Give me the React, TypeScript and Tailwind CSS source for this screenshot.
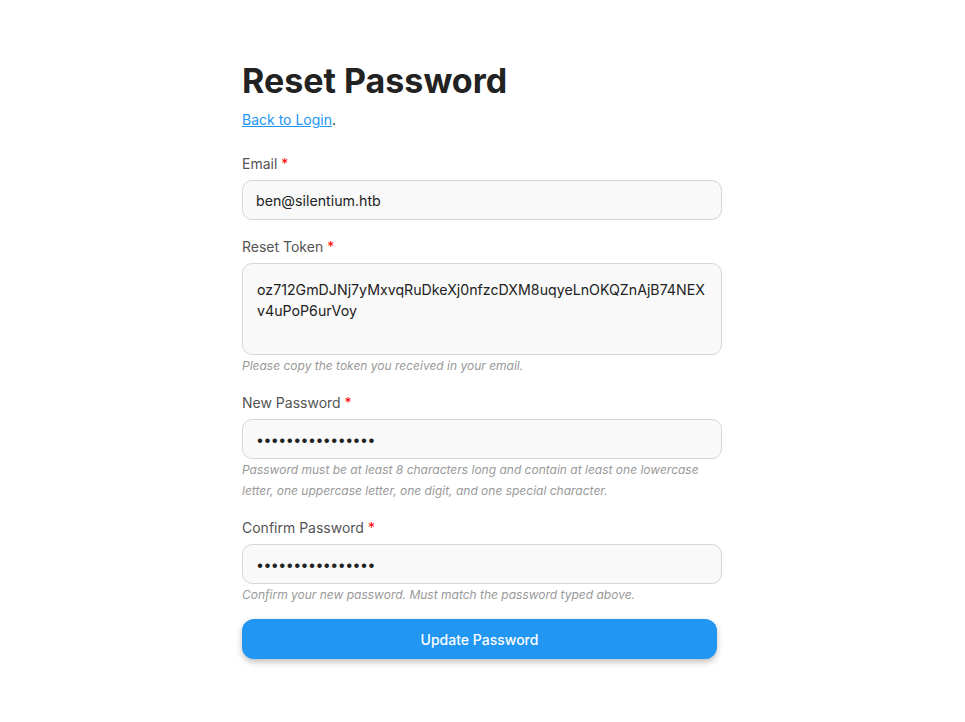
import { ReactNode } from "react";

const token = "oz712GmDJNj7yMxvqRuDkeXj0nfzcDXM8uqyeLnOKQZnAjB74NEXv4uPoP6urVoy";

function Field({ label, children, help }: { label: string; children: ReactNode; help?: string }) {
  return (
    <div className="mb-[15px]">
      <label className="mb-1 block text-[14px] leading-6 text-[#555]">
        {label} <span className="text-[#f00]">*</span>
      </label>
      {children}
      {help && <p className="text-[12px] italic leading-[21px] text-[#999]">{help}</p>}
    </div>
  );
}

const inputCls =
  "block h-10 w-full rounded-[10px] border border-[#d6d6d6] bg-[#f9f9f9] px-[13px] text-[14.2px] text-[#222] outline-none";

export default function App() {
  return (
    <div className="min-h-screen bg-white pr-px font-['Inter','Noto_Sans',sans-serif] text-[#222]">
      <div className="mx-auto w-[480px] pt-[60px]">
        <h1 className="text-[34px] font-bold leading-[41px] text-[#222]">Reset Password</h1>
        <p className="mt-[9px] text-[14px] leading-5">
          <a href="#" className="text-[#2196f3] underline">
            Back to Login
          </a>
          .
        </p>

        <form className="mt-[22px]" onSubmit={(e) => e.preventDefault()}>
          <Field label="Email">
            <input className={inputCls} type="email" defaultValue="ben@silentium.htb" />
          </Field>

          <Field label="Reset Token" help="Please copy the token you received in your email.">
            <textarea
              className="block h-[92px] w-full resize-none rounded-[10px] border border-[#d6d6d6] bg-[#f9f9f9] px-[14px] pt-[15px] text-[14.2px] leading-[21px] break-all text-[#222] outline-none"
              defaultValue={token}
            />
          </Field>

          <Field
            label="New Password"
            help="Password must be at least 8 characters long and contain at least one lowercase letter, one uppercase letter, one digit, and one special character."
          >
            <input className={`${inputCls} tracking-[-0.55px]`} type="password" defaultValue="Sup3rS3cur3Pass!" />
          </Field>

          <Field label="Confirm Password" help="Confirm your new password. Must match the password typed above.">
            <input className={`${inputCls} tracking-[-0.55px]`} type="password" defaultValue="Sup3rS3cur3Pass!" />
          </Field>

          <button
            type="submit"
            className="-mt-px h-10 w-[475px] rounded-xl bg-[#2196f3] text-[14px] font-medium text-white shadow-[0_3px_6px_rgba(0,0,0,0.25)]"
          >
            Update Password
          </button>
        </form>
      </div>
    </div>
  );
}
